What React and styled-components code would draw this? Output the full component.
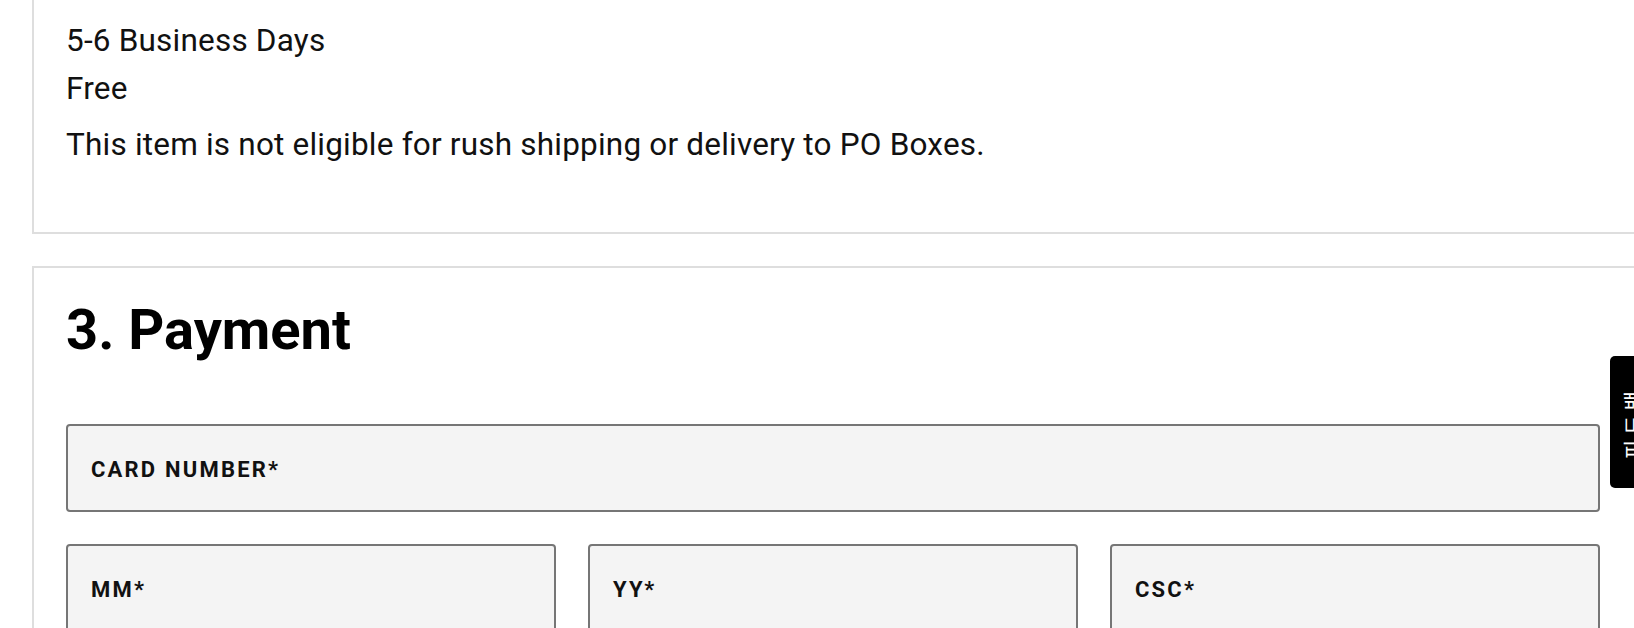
import React from "react";
import styled, { createGlobalStyle } from "styled-components";

const GlobalStyle = createGlobalStyle`
  html, body {
    margin: 0;
    padding: 0;
    background: #ffffff;
    overflow: hidden;
  }
  body {
    font-family: Roboto, "Liberation Sans", Arial, sans-serif;
    color: #111111;
  }
`;

const Page = styled.main`
  display: flex;
  flex-direction: column;
  gap: 32px;
  padding-left: 32px;
  margin-top: -20px;
`;

const Card = styled.section`
  width: 1610px;
  box-sizing: border-box;
  border: 2px solid #dedede;
  padding: ${(p) => (p.$top ? "35px 40px 63px 32px" : "29px 40px 40px 32px")};
  background: #ffffff;
`;

const InfoLine = styled.p`
  margin: ${(p) => (p.$spaced ? "8px 0 0" : "0")};
  font-size: 31.5px;
  line-height: 48px;
  font-weight: 400;
  letter-spacing: 0.2px;
  color: #111111;
`;

const Heading = styled.h2`
  margin: 0 0 60px;
  font-size: 56px;
  line-height: 67px;
  font-weight: 700;
  color: #000000;
`;

const FieldGrid = styled.div`
  display: grid;
  grid-template-columns: repeat(${(p) => p.$cols}, 1fr);
  gap: 32px;
  margin-bottom: 32px;
`;

const Field = styled.label`
  display: flex;
  align-items: center;
  box-sizing: border-box;
  height: 88px;
  padding: 3px 23px 0;
  background: #f4f4f4;
  border: 2px solid #767676;
  border-radius: 4px;
`;

const FieldLabel = styled.span`
  font-size: 22px;
  line-height: 22px;
  font-weight: 700;
  letter-spacing: 2.2px;
  color: #111111;
  text-transform: uppercase;
`;

const FeedbackTab = styled.button`
  position: fixed;
  top: 356px;
  right: -16px;
  width: 40px;
  height: 132px;
  padding: 0;
  border: none;
  border-radius: 5px 0 0 5px;
  background: #000000;
  color: #ffffff;
  display: flex;
  align-items: center;
  justify-content: center;
  cursor: pointer;
`;

const TabText = styled.span`
  font-family: "Noto Sans CJK KR", sans-serif;
  font-size: 21px;
  line-height: 21px;
  letter-spacing: 5px;
  writing-mode: vertical-rl;
  text-orientation: sideways;
  transform: rotate(180deg);
  margin-left: 4px;
`;

export default function App() {
  return (
    <>
      <GlobalStyle />
      <Page>
        <Card $top>
          <InfoLine>5-6 Business Days</InfoLine>
          <InfoLine>Free</InfoLine>
          <InfoLine $spaced>
            This item is not eligible for rush shipping or delivery to PO Boxes.
          </InfoLine>
        </Card>
        <Card>
          <Heading>3. Payment</Heading>
          <FieldGrid $cols={1}>
            <Field>
              <FieldLabel>Card Number*</FieldLabel>
            </Field>
          </FieldGrid>
          <FieldGrid $cols={3}>
            <Field>
              <FieldLabel>MM*</FieldLabel>
            </Field>
            <Field>
              <FieldLabel>YY*</FieldLabel>
            </Field>
            <Field>
              <FieldLabel>CSC*</FieldLabel>
            </Field>
          </FieldGrid>
        </Card>
      </Page>
      <FeedbackTab>
        <TabText>피드백</TabText>
      </FeedbackTab>
    </>
  );
}
